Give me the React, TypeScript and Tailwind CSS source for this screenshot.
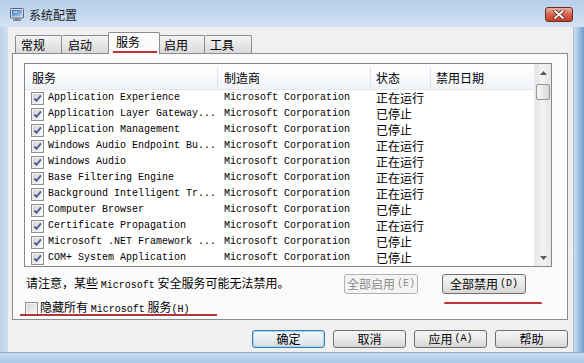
import React from "react";

interface IRow {
  name: string;
  status: string;
}

const rows: IRow[] = [
  { name: "Application Experience", status: "正在运行" },
  { name: "Application Layer Gateway...", status: "已停止" },
  { name: "Application Management", status: "已停止" },
  { name: "Windows Audio Endpoint Bu...", status: "正在运行" },
  { name: "Windows Audio", status: "正在运行" },
  { name: "Base Filtering Engine", status: "正在运行" },
  { name: "Background Intelligent Tr...", status: "正在运行" },
  { name: "Computer Browser", status: "已停止" },
  { name: "Certificate Propagation", status: "正在运行" },
  { name: "Microsoft .NET Framework ...", status: "已停止" },
  { name: "COM+ System Application", status: "已停止" },
];

const mono = "font-['Liberation_Mono',monospace] text-[10px]";

const CheckBox = ({ checked = true }: { checked?: boolean }) => (
  <svg width="13" height="13" viewBox="0 0 13 13" className="shrink-0">
    <defs>
      <linearGradient id="cbFill" x1="0" y1="0" x2="1" y2="1">
        <stop offset="0" stopColor="#d2d4d6" />
        <stop offset="1" stopColor="#f7f7f7" />
      </linearGradient>
    </defs>
    <rect x="0.5" y="0.5" width="12" height="12" fill="#f4f4f4" stroke="#8e8f8f" />
    <rect x="2" y="2" width="9" height="9" fill="url(#cbFill)" />
    {checked && (
      <path d="M3.3 6.3 L5.5 8.9 L9.9 3.4" fill="none" stroke="#4c5f8f" strokeWidth="1.8" />
    )}
  </svg>
);

const Arrow = ({ up }: { up?: boolean }) => (
  <svg width="7" height="4" viewBox="0 0 7 4">
    <path d={up ? "M0 4 L3.5 0 L7 4 Z" : "M0 0 L3.5 4 L7 0 Z"} fill="#5a5a5a" />
  </svg>
);

const Button = ({
  children,
  className,
}: {
  children: React.ReactNode;
  className: string;
}) => (
  <div
    className={
      "flex items-center justify-center rounded-[3px] border text-[12px] leading-none " +
      className
    }
  >
    {children}
  </div>
);

const App = () => {
  return (
    <div className="relative w-[584px] h-[363px] overflow-hidden flex flex-col bg-[#c2d7ee] font-['Noto_Sans_CJK_SC',sans-serif] text-[12px] text-black">
      {/* title bar */}
      <div className="h-[27px] shrink-0 flex items-center pl-[9px] pr-[11px] pt-[5px] bg-linear-to-b from-[#b6cfea] to-[#d2e2f3]">
        <svg width="16" height="15" viewBox="0 0 16 15" className="shrink-0 -mt-[3px]">
          <defs>
            <linearGradient id="scr" x1="0" y1="0" x2="1" y2="1">
              <stop offset="0" stopColor="#2b63b5" />
              <stop offset="1" stopColor="#b9d8f5" />
            </linearGradient>
          </defs>
          <rect x="1.5" y="1.5" width="13" height="9.5" rx="1" fill="#dfe3e8" stroke="#566070" />
          <rect x="3" y="3" width="10" height="6.5" fill="url(#scr)" />
          <path d="M4.5 4.5 h4 v1 h-4z" fill="#fff" />
          <path d="M6 11 h4 v1.5 h2 v1.5 H4 v-1.5 h2z" fill="#7c8692" />
        </svg>
        <span className="ml-[4px] leading-none text-[12px] text-[#1b1b1b] -mt-[2px]">系统配置</span>
        <div className="ml-auto w-[28px] h-[15px] -mt-[3px] rounded-[3px] border border-[#6e2a1f] bg-linear-to-b from-[#eab1a3] via-[#d3644d] to-[#bf3f28] flex items-center justify-center">
          <svg width="12" height="9" viewBox="0 0 12 9">
            <path d="M2 1 L10 8 M10 1 L2 8" stroke="#5b2219" strokeWidth="3.4" strokeLinecap="round" />
            <path d="M2 1 L10 8 M10 1 L2 8" stroke="#ffffff" strokeWidth="1.8" strokeLinecap="round" />
          </svg>
        </div>
      </div>

      {/* body */}
      <div className="flex flex-1 min-h-0">
        <div className="w-[8px] bg-linear-to-r from-[#bcd3ec] to-[#cfe0f2]" />
        <div className="w-[565px] bg-[#f0f0f0] flex flex-col pl-[4px] pt-[5px]">
          {/* tabs */}
          <div className="h-[21px] flex items-end">
            <div className="ml-[3px] w-[47px] h-[18px] pl-[5px] flex items-center border border-b-0 border-[#898c95] rounded-t-[2px] bg-linear-to-b from-[#f4f4f4] to-[#dadada]">
              常规
            </div>
            <div className="w-[48px] h-[18px] pl-[6px] flex items-center border border-l-0 border-b-0 border-[#898c95] rounded-t-[2px] bg-linear-to-b from-[#f4f4f4] to-[#dadada]">
              启动
            </div>
            <div className="relative z-10 w-[52px] h-[22px] -mb-px -mr-[2px] -ml-[2px] pl-[7px] pb-[3px] flex items-center border border-b-0 border-[#898c95] rounded-t-[2px] bg-[#fbfbfb]">
              服务
            </div>
            <div className="w-[47px] h-[18px] pl-[5px] flex items-center border border-b-0 border-[#898c95] rounded-t-[2px] bg-linear-to-b from-[#f4f4f4] to-[#dadada]">
              启用
            </div>
            <div className="w-[47px] h-[18px] pl-[5px] flex items-center border border-l-0 border-b-0 border-[#898c95] rounded-t-[2px] bg-linear-to-b from-[#f4f4f4] to-[#dadada]">
              工具
            </div>
          </div>

          {/* tab panel */}
          <div className="w-[556px] h-[267px] border border-[#898c95] bg-[#fbfbfb] pl-[11px] pt-[9px] flex flex-col">
            <div className="w-[528px] h-[204px] border border-[#828790] bg-white flex">
              <div className="flex-1 flex flex-col">
                {/* header */}
                <div className="h-[26px] flex pt-[3px] bg-linear-to-b from-[#ffffff] to-[#f1f4f8] border-b border-[#e3e7ec]">
                  <div className="w-[193px] pl-[7px] flex items-center border-r border-[#dfe3e8]">服务</div>
                  <div className="w-[153px] pl-[6px] flex items-center border-r border-[#dfe3e8]">制造商</div>
                  <div className="w-[60px] pl-[5px] flex items-center border-r border-[#dfe3e8]">状态</div>
                  <div className="flex-1 pl-[5px] flex items-center">禁用日期</div>
                </div>
                {rows.map((r) => (
                  <div key={r.name} className="h-[16px] flex items-center">
                    <div className="w-[193px] pl-[6px] flex items-center gap-[4px]">
                      <CheckBox />
                      <span className={mono + " leading-none whitespace-pre"}>{r.name}</span>
                    </div>
                    <div className={"w-[153px] pl-[6px] leading-none " + mono}>Microsoft Corporation</div>
                    <div className="w-[60px] pl-[5px] leading-none">{r.status}</div>
                  </div>
                ))}
              </div>
              {/* scrollbar */}
              <div className="w-[17px] flex flex-col bg-linear-to-r from-[#e6e6e6] via-[#f3f3f3] to-[#e6e6e6] border-l border-[#ececec]">
                <div className="h-[17px] flex items-center justify-center">
                  <Arrow up />
                </div>
                <div className="mx-[1px] mt-[3px] h-[16px] rounded-[2px] border border-[#979797] bg-linear-to-r from-[#f6f6f6] to-[#d9d9d9]" />
                <div className="flex-1" />
                <div className="h-[17px] flex items-center justify-center">
                  <Arrow />
                </div>
              </div>
            </div>

            {/* note + buttons */}
            <div className="w-[528px] h-[20px] mt-[7px] flex items-center">
              <span className="pl-[2px] leading-none">
                请注意，某些 <span className={mono}>Microsoft</span> 安全服务可能无法禁用。
              </span>
              <Button className="ml-auto w-[74px] h-[20px] border-[#adb2b5] bg-[#f4f4f4] text-[#8a8a8a]">
                全部启用<span className={mono + " ml-[2px]"}>(E)</span>
              </Button>
              <Button className="ml-[24px] mr-[26px] w-[84px] h-[20px] border-[#707070] bg-linear-to-b from-[#f3f3f3] via-[#ebebeb] to-[#d6d6d6]">
                全部禁用<span className={mono + " ml-[2px]"}>(D)</span>
              </Button>
            </div>

            {/* hide MS services */}
            <div className="h-[14px] mt-[7px] flex items-center gap-[2px] pl-[1px]">
              <CheckBox checked={false} />
              <span className="leading-none">
                隐藏所有 <span className={mono}>Microsoft</span> 服务<span className={mono}>(H)</span>
              </span>
            </div>
          </div>

          {/* dialog buttons */}
          <div className="w-[556px] mt-[10px] flex justify-end gap-[8px]">
            <Button className="w-[73px] h-[18px] border-[#3c7fb1] bg-linear-to-b from-[#f2f7fb] via-[#e9eef2] to-[#d2dde6] shadow-[inset_0_0_0_1px_#a6d3f0]">
              确定
            </Button>
            <Button className="w-[73px] h-[18px] border-[#707070] bg-linear-to-b from-[#f3f3f3] via-[#ebebeb] to-[#d6d6d6]">
              取消
            </Button>
            <Button className="w-[73px] h-[18px] border-[#707070] bg-linear-to-b from-[#f3f3f3] via-[#ebebeb] to-[#d6d6d6]">
              应用<span className={mono + " ml-[2px]"}>(A)</span>
            </Button>
            <Button className="w-[73px] h-[18px] border-[#707070] bg-linear-to-b from-[#f3f3f3] via-[#ebebeb] to-[#d6d6d6]">
              帮助
            </Button>
          </div>
        </div>
        <div className="flex-1 border-l border-[#a9bfd6] bg-linear-to-r from-[#cddff1] via-[#9fc0e3] to-[#6f9dcc]" />
      </div>
      <div className="h-[11px] shrink-0 border-t border-[#8ea9c6] bg-linear-to-b from-[#c9dcf0] to-[#a8c6e7]" />

      {/* red annotation lines */}
      <div className="absolute left-[113px] top-[51px] w-[44px] h-[2px] bg-[#c2323b] z-20" />
      <div className="absolute left-[444px] top-[302px] w-[98px] h-[2px] bg-[#c2323b] rounded-full" />
      <div className="absolute left-[20px] top-[314px] w-[197px] h-[2px] bg-[#b8323a]" />
    </div>
  );
};

export default App;
